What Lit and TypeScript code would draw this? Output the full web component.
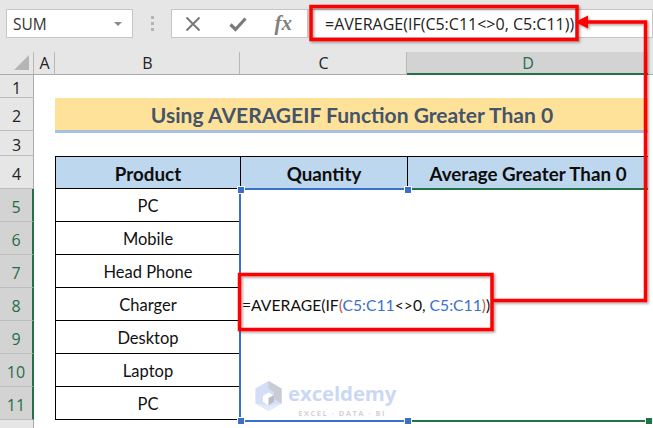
import { LitElement, html, css, svg } from "lit";
import { customElement } from "lit/decorators.js";

const products = ["PC", "Mobile", "Head Phone", "Charger", "Desktop", "Laptop", "PC"];

@customElement("app-root")
export class AppRoot extends LitElement {
  static styles = css`
    :host { display: block; width: 653px; height: 428px; overflow: hidden; position: relative; background: #e6e6e6; font-family: "Open Sans", sans-serif; color: #1a1a1a; }
    .bar { display: flex; height: 29px; padding: 9px 0 0 6px; align-items: stretch; box-sizing: content-box; }
    .box { background: #fff; border: 1px solid #c6c6c6; box-sizing: border-box; display: flex; align-items: center; }
    .name { width: 127px; justify-content: space-between; padding: 0 10px 0 6px; font-size: 15.5px; color: #333; }
    .caret { width: 0; height: 0; border-left: 4px solid transparent; border-right: 4px solid transparent; border-top: 4px solid #8a8a8a; }
    .dots { width: 38px; display: flex; flex-direction: column; align-items: center; justify-content: center; gap: 3px; }
    .dots i { width: 3px; height: 3px; background: #b4b4b4; display: block; }
    .fx { width: 137px; justify-content: space-between; padding: 0 15px 0 13px; }
    .fxt { font: italic 700 21px "Liberation Serif", serif; color: #7f7f7f; line-height: 1; }
    .fbar { flex: 1; padding-left: 16px; font-size: 16px; white-space: nowrap; color: #222; }
    .sheet { display: grid; margin-top: 14px; grid-template-columns: 34px 21px 185px 167px 241px 5px; grid-template-rows: 23px 23px 33px 25px 33px repeat(7, 33px) 8px; background: #fff; height: 376px; }
    .ch { background: #e6e6e6; border-bottom: 1px solid #ababab; border-right: 1px solid #b8b8b8; display: flex; align-items: center; justify-content: center; font-size: 16px; color: #222; box-sizing: border-box; padding-left: 1px; }
    .ch.active { background: #d3d3d3; color: #1f6e46; border-bottom: 2px solid #217346; border-right: none; }
    .ch.end { border-right: none; }
    .corner { position: relative; }
    .corner svg { position: absolute; left: 14px; top: 3px; }
    .rh { background: #e6e6e6; border-bottom: 1px solid #bdbdbd; border-right: 1px solid #ababab; display: flex; align-items: center; justify-content: center; font-size: 16px; color: #222; box-sizing: border-box; padding-top: 3px; }
    .rh.active { background: #d3d3d3; color: #1f6e46; border-right: 2px solid #217346; }
    .title { grid-column: 3 / 6; background: #ffe299; border-bottom: 3px solid #a9bfe0; margin-bottom: -2px; display: flex; align-items: center; justify-content: center; padding-left: 1px; font: 700 21.05px Lato, sans-serif; color: #44546a; position: relative; }
    .w { background: #fff; }
    .blank { grid-column: 2 / 7; background: #fff; }
    .th { background: #bdd7ee; border-top: 1px solid #000; border-left: 1px solid #000; border-bottom: 1px solid #000; box-sizing: border-box; display: flex; align-items: center; justify-content: center; padding-top: 1px; font: 700 18.8px Lato, sans-serif; color: #0d0d0d; }
    .th.last { border-right: none; }
    .td { border-left: 1px solid #000; border-bottom: 1px solid #000; box-sizing: border-box; display: flex; align-items: center; justify-content: center; padding-top: 2px; font: 400 16.5px Lato, sans-serif; color: #111; background: #fff; grid-column: 3; }
    .c-merged { grid-column: 4; grid-row: 6 / 13; border: solid #3a70cc; border-width: 2px 0 2px 2px; margin: -1px 0 -2px -1px; display: flex; align-items: center; background: #fff; box-sizing: border-box; position: relative; z-index: 1; overflow: visible; white-space: nowrap; font: 400 15.7px Lato, sans-serif; color: #111; padding-left: 1px; }
    .d-merged { grid-column: 5; grid-row: 6 / 13; border: solid #217346; border-width: 2px 0 2px 0; margin: -1px 0 -2px 0; background: #fff; box-sizing: border-box; position: relative; }
    .ref { color: #3a70cc; }
    .par { color: #b85a5a; }
    .tail { grid-column: 1 / 7; grid-row: 13; display: flex; background: #fff; }
    .tail i { width: 34px; background: #e6e6e6; border-right: 1px solid #ababab; box-sizing: border-box; display: block; }
    .handle { position: absolute; z-index: 2; width: 6px; height: 6px; background: #3a70cc; border: 1px solid #fff; box-sizing: content-box; }
    .h1 { left: 237px; top: 186px; }
    .h2 { left: 237px; top: 417px; }
    .h3 { left: 404px; top: 186px; }
    .h4 { left: 404px; top: 417px; }
    .h5 { left: 645px; top: 417px; background: #217346; }
    .anno { position: absolute; z-index: 3; left: 0; top: 0; pointer-events: none; }
    .wm { position: absolute; z-index: 2; left: 255px; top: 381px; display: flex; gap: 6px; pointer-events: none; }
    .wmt { display: flex; flex-direction: column; align-items: center; line-height: 1; }
    .wm1 { font: 700 20.4px "Open Sans", sans-serif; color: #cbd8f5; margin-top: -2px; letter-spacing: -0.1px; }
    .wm2 { font: 700 7.5px "Open Sans", sans-serif; color: #d4d4d4; letter-spacing: 1.5px; margin-top: 1px; }
  `;

  render() {
    return html`
      <div class="bar">
        <div class="box name">SUM<span class="caret"></span></div>
        <div class="dots"><i></i><i></i><i></i></div>
        <div class="box fx">
          <svg width="16" height="16" viewBox="0 0 16 16"><path d="M1.5 1.5 L14.5 14.5 M14.5 1.5 L1.5 14.5" stroke="#7a7a7a" stroke-width="2" fill="none"/></svg>
          <svg width="18" height="16" viewBox="0 0 18 16"><path d="M1.5 8.5 L6.5 13.5 L16.5 2.5" stroke="#7a7a7a" stroke-width="3.2" fill="none"/></svg>
          <span class="fxt">fx</span>
        </div>
        <div class="box fbar">=AVERAGE(IF(C5:C11&lt;&gt;0, C5:C11))</div>
      </div>
      <div class="sheet">
        <div class="ch corner"><svg width="16" height="16" viewBox="0 0 16 16"><path d="M15 0 V15 H0 Z" fill="#b5b5b5"/></svg></div>
        <div class="ch">A</div><div class="ch">B</div><div class="ch">C</div><div class="ch active">D</div><div class="ch end"></div>

        <div class="rh">1</div><div class="blank"></div>
        <div class="rh">2</div><div class="w"></div><div class="title">Using AVERAGEIF Function Greater Than 0</div><div class="w"></div>
        <div class="rh">3</div><div class="blank"></div>
        <div class="rh">4</div><div class="w"></div>
        <div class="th">Product</div><div class="th">Quantity</div><div class="th last">Average Greater Than 0</div><div class="w"></div>

        ${products.map((p, i) => html`
          <div class="rh active" style="grid-row:${i + 6}">${i + 5}</div>
          <div class="w" style="grid-row:${i + 6}"></div>
          <div class="td" style="grid-row:${i + 6}">${p}</div>
        `)}
        <div class="tail"><i></i></div>
        <div class="c-merged"><span>=AVERAGE(IF<span class="par">(</span><span class="ref">C5:C11</span>&lt;&gt;0, <span class="ref">C5:C11</span><span class="par">)</span>)</span></div>
        <div class="d-merged"></div>
      </div>

      <div class="wm">
        <svg width="27" height="30" viewBox="0 0 28 32">
          <path d="M14 0 L28 8 V24 L14 32 L0 24 V8 Z" fill="#d3def7"/>
          <path d="M14 0 L28 8 V24 L20 19 V12 L14 8 Z" fill="#c8ccd4"/>
          <path d="M14 12 L20 16 V22 L14 26 L8 22 V16 Z" fill="#fff"/>
          <path d="M14 18 L20 15 V22 L14 26 Z" fill="#b9bdc6"/>
          <path d="M0 24 L14 32 L28 24 L14 26 Z" fill="#e4eafa"/>
        </svg>
        <div class="wmt"><span class="wm1">exceldemy</span><span class="wm2">EXCEL · DATA · BI</span></div>
      </div>

      <span class="handle h1"></span><span class="handle h2"></span><span class="handle h3"></span><span class="handle h4"></span><span class="handle h5"></span>

      <svg class="anno" width="653" height="428" viewBox="0 0 653 428">
        <defs><filter id="s" x="-5%" y="-5%" width="110%" height="110%"><feDropShadow dx="1.5" dy="1.5" stdDeviation="1" flood-color="#000" flood-opacity="0.35"/></filter></defs>
        ${svg`<g filter="url(#s)" fill="none" stroke="#fe0000" stroke-width="3.5">
          <rect x="311" y="6.5" width="266" height="33"/>
          <rect x="239.5" y="274.5" width="252.5" height="55"/>
          <path d="M492 300.5 H645.5 V22 H585"/>
          <path d="M575 22 L588 15.5 V28.5 Z" fill="#fe0000" stroke="none"/>
        </g>`}
      </svg>
    `;
  }
}
